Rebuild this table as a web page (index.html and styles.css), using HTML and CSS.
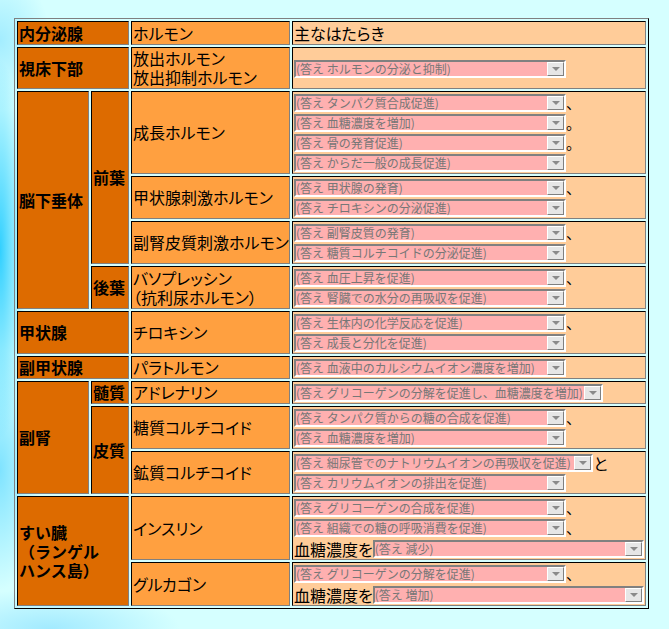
FILE: index.html
```html
<!DOCTYPE html>
<html lang="ja">
<head>
<meta charset="utf-8">
<title>内分泌腺とホルモン</title>
<link rel="stylesheet" href="styles.css">
</head>
<body>
<table class="hormones">
  <colgroup>
    <col class="c-gland">
    <col class="c-sub">
    <col class="c-name">
    <col class="c-func">
  </colgroup>
  <tr>
    <th colspan="2" class="gland">内分泌腺</th>
    <td class="name">ホルモン</td>
    <td class="func head">主なはたらき</td>
  </tr>
  <tr>
    <th colspan="2" class="gland">視床下部</th>
    <td class="name"><span class="l">放出ホルモン</span><span class="l">放出抑制ホルモン</span></td>
    <td class="func">
      <div class="ln"><span class="sel"><span class="txt">(答え ホルモンの分泌と抑制)</span><span class="btn"></span></span></div>
    </td>
  </tr>
  <tr>
    <th rowspan="4" class="gland">脳下垂体</th>
    <th rowspan="3" class="gland">前葉</th>
    <td class="name">成長ホルモン</td>
    <td class="func">
      <div class="ln"><span class="sel"><span class="txt">(答え タンパク質合成促進)</span><span class="btn"></span></span><span class="pn">、</span></div>
      <div class="ln"><span class="sel"><span class="txt">(答え 血糖濃度を増加)</span><span class="btn"></span></span><span class="pn">。</span></div>
      <div class="ln"><span class="sel"><span class="txt">(答え 骨の発育促進)</span><span class="btn"></span></span><span class="pn">。</span></div>
      <div class="ln"><span class="sel"><span class="txt">(答え からだ一般の成長促進)</span><span class="btn"></span></span></div>
    </td>
  </tr>
  <tr>
    <td class="name">甲状腺刺激ホルモン</td>
    <td class="func">
      <div class="ln"><span class="sel"><span class="txt">(答え 甲状腺の発育)</span><span class="btn"></span></span><span class="pn">、</span></div>
      <div class="ln"><span class="sel"><span class="txt">(答え チロキシンの分泌促進)</span><span class="btn"></span></span></div>
    </td>
  </tr>
  <tr>
    <td class="name">副腎皮質刺激ホルモン</td>
    <td class="func">
      <div class="ln"><span class="sel"><span class="txt">(答え 副腎皮質の発育)</span><span class="btn"></span></span><span class="pn">、</span></div>
      <div class="ln"><span class="sel"><span class="txt">(答え 糖質コルチコイドの分泌促進)</span><span class="btn"></span></span></div>
    </td>
  </tr>
  <tr>
    <th class="gland">後葉</th>
    <td class="name"><span class="l">バソプレッシン</span><span class="l">（抗利尿ホルモン）</span></td>
    <td class="func">
      <div class="ln"><span class="sel"><span class="txt">(答え 血圧上昇を促進)</span><span class="btn"></span></span><span class="pn">、</span></div>
      <div class="ln"><span class="sel"><span class="txt">(答え 腎臓での水分の再吸収を促進)</span><span class="btn"></span></span></div>
    </td>
  </tr>
  <tr>
    <th colspan="2" class="gland">甲状腺</th>
    <td class="name">チロキシン</td>
    <td class="func">
      <div class="ln"><span class="sel"><span class="txt">(答え 生体内の化学反応を促進)</span><span class="btn"></span></span><span class="pn">、</span></div>
      <div class="ln"><span class="sel"><span class="txt">(答え 成長と分化を促進)</span><span class="btn"></span></span></div>
    </td>
  </tr>
  <tr>
    <th colspan="2" class="gland">副甲状腺</th>
    <td class="name">パラトルモン</td>
    <td class="func">
      <div class="ln"><span class="sel"><span class="txt">(答え 血液中のカルシウムイオン濃度を増加)</span><span class="btn"></span></span></div>
    </td>
  </tr>
  <tr>
    <th rowspan="3" class="gland">副腎</th>
    <th class="gland">髄質</th>
    <td class="name">アドレナリン</td>
    <td class="func">
      <div class="ln"><span class="sel wide1"><span class="txt">(答え グリコーゲンの分解を促進し、血糖濃度を増加)</span><span class="btn"></span></span></div>
    </td>
  </tr>
  <tr>
    <th rowspan="2" class="gland">皮質</th>
    <td class="name">糖質コルチコイド</td>
    <td class="func">
      <div class="ln"><span class="sel"><span class="txt">(答え タンパク質からの糖の合成を促進)</span><span class="btn"></span></span><span class="pn">、</span></div>
      <div class="ln"><span class="sel"><span class="txt">(答え 血糖濃度を増加)</span><span class="btn"></span></span></div>
    </td>
  </tr>
  <tr>
    <td class="name">鉱質コルチコイド</td>
    <td class="func">
      <div class="ln"><span class="sel wide2"><span class="txt">(答え 細尿管でのナトリウムイオンの再吸収を促進)</span><span class="btn"></span></span><span class="pn to">と</span></div>
      <div class="ln"><span class="sel"><span class="txt">(答え カリウムイオンの排出を促進)</span><span class="btn"></span></span></div>
    </td>
  </tr>
  <tr>
    <th colspan="2" rowspan="2" class="gland"><span class="l">すい臓</span><span class="l">（ランゲル</span><span class="l">ハンス島）</span></th>
    <td class="name">インスリン</td>
    <td class="func">
      <div class="ln"><span class="sel"><span class="txt">(答え グリコーゲンの合成を促進)</span><span class="btn"></span></span><span class="pn">、</span></div>
      <div class="ln"><span class="sel"><span class="txt">(答え 組織での糖の呼吸消費を促進)</span><span class="btn"></span></span><span class="pn">、</span></div>
      <div class="ln big"><span class="lbl">血糖濃度を</span><span class="sel fill"><span class="txt">(答え 減少)</span><span class="btn"></span></span></div>
    </td>
  </tr>
  <tr>
    <td class="name">グルカゴン</td>
    <td class="func">
      <div class="ln"><span class="sel"><span class="txt">(答え グリコーゲンの分解を促進)</span><span class="btn"></span></span><span class="pn">、</span></div>
      <div class="ln big"><span class="lbl">血糖濃度を</span><span class="sel fill"><span class="txt">(答え 増加)</span><span class="btn"></span></span></div>
    </td>
  </tr>
</table>
</body>
</html>
```

FILE: styles.css
```css
html {
  min-height: 100%;
  background-color: #d5ffff;
  background-image:
    radial-gradient(ellipse 26px 190px at 0 250px, rgba(40, 205, 255, 0.95), rgba(40, 205, 255, 0)),
    radial-gradient(ellipse 40px 120px at 0 470px, rgba(90, 215, 255, 0.7), rgba(90, 215, 255, 0)),
    radial-gradient(ellipse 50px 70px at 0 40px, rgba(130, 225, 255, 0.6), rgba(130, 225, 255, 0)),
    radial-gradient(ellipse 130px 40px at 50px 629px, rgba(140, 225, 255, 0.7), rgba(140, 225, 255, 0));
  background-repeat: no-repeat;
}

body {
  margin: 0;
  padding: 18px 0 0 14px;
  font-family: "Noto Sans CJK JP", "Noto Sans", sans-serif;
  color: #000;
}

.hormones {
  table-layout: fixed;
  width: 635px;
  border-collapse: separate;
  border-spacing: 2px;
  border: 1px solid;
  border-color: #808080 #000 #000 #808080;
}

.c-gland { width: 72px; }
.c-sub { width: 38px; }
.c-name { width: 159px; }
.c-func { width: 354px; }

.hormones th,
.hormones td {
  box-sizing: border-box;
  border: 1px solid;
  border-color: #000 #808080 #808080 #000;
  padding: 1px 1px;
  vertical-align: middle;
  text-align: left;
}

.gland {
  background: #dd6b00;
  font-size: 16px;
  font-weight: bold;
  line-height: 19px;
  white-space: nowrap;
}

.name {
  background: #ffa040;
  font-size: 16px;
  line-height: 19px;
  white-space: nowrap;
  font-feature-settings: "palt";
}

.l {
  display: block;
  height: 19px;
}

.func {
  background: #ffcc99;
  padding: 1px 1px 0 !important;
}

.func.head {
  font-size: 16px;
  line-height: 20px;
  padding-bottom: 1px !important;
  font-feature-settings: "palt";
}

.ln {
  display: flex;
  align-items: center;
  height: 20px;
  white-space: nowrap;
}

.ln.big {
  height: 21px;
}

.sel {
  display: inline-flex;
  align-items: center;
  box-sizing: border-box;
  width: 272px;
  height: 18px;
  border: 2px solid;
  border-color: #808080 #fff #fff #808080;
  background: #ffb0b0;
  flex: none;
}

.sel.wide1 { width: 309px; }
.sel.wide2 { width: 299px; }
.sel.fill { flex: 1; width: auto; }

.txt {
  flex: 1;
  min-width: 0;
  font-size: 12px;
  line-height: 14px;
  color: #777;
  white-space: nowrap;
}

.btn {
  flex: none;
  align-self: stretch;
  width: 17px;
  box-sizing: border-box;
  border: 1px solid;
  border-color: #fff #808080 #808080 #fff;
  background: #e6e6e6;
  display: flex;
  align-items: center;
  justify-content: center;
}

.btn::after {
  content: "";
  width: 0;
  height: 0;
  border-left: 4px solid transparent;
  border-right: 4px solid transparent;
  border-top: 4px solid #8a8a8a;
}

.pn {
  font-size: 15px;
  line-height: 18px;
}

.pn.to {
  font-size: 16px;
}

.lbl {
  font-size: 16px;
  line-height: 20px;
  flex: none;
  font-feature-settings: "palt";
}
```
